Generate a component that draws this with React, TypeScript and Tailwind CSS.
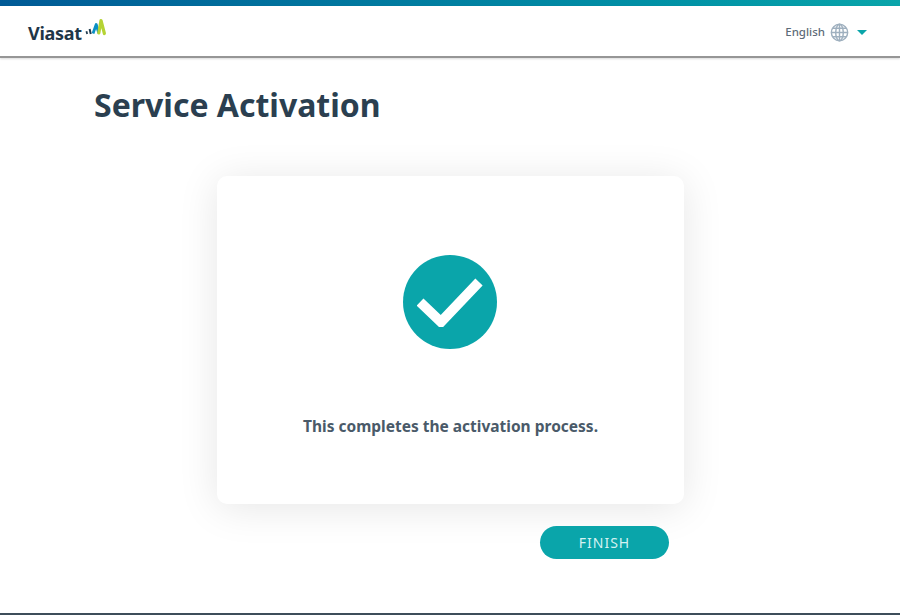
function ViasatMark() {
  return (
    <svg width="24" height="20" viewBox="85 14 24 20" className="mt-[-13px] ml-[2px]" fill="none">
      <path d="M87.4 28.3 L88.2 31" stroke="#1d3a4f" strokeWidth="1.8" />
      <path d="M90.6 26 L91.8 31" stroke="#1d3a4f" strokeWidth="2" />
      <path d="M94 30.5 L97.2 21.5 L99.8 30" stroke="#0a8fc4" strokeWidth="2.8" strokeLinejoin="round" />
      <path d="M99.8 30 L102 17.5 L105.4 30.5" stroke="#b5d334" strokeWidth="3.2" strokeLinecap="round" strokeLinejoin="round" />
    </svg>
  );
}

function GlobeIcon() {
  return (
    <svg width="19" height="19" viewBox="0 0 20 20" fill="none" stroke="#9fb0bf" strokeWidth="1.5">
      <circle cx="10" cy="10" r="8.6" />
      <ellipse cx="10" cy="10" rx="4" ry="8.6" />
      <path d="M10 1.4 V18.6 M1.4 10 H18.6 M2.8 5.6 H17.2 M2.8 14.4 H17.2" />
    </svg>
  );
}

export default function App() {
  return (
    <div className="flex h-[615px] w-[900px] flex-col overflow-hidden bg-white font-['Noto_Sans',sans-serif]">
      <div className="h-[6px] bg-gradient-to-r from-[#005a96] to-[#0aa5aa]" />
      <header className="flex h-[52px] items-center justify-between border-b-2 border-[#969696] pr-[33px] pl-[28px] shadow-[0_1px_2px_rgba(0,0,0,0.15)]">
        <div className="flex items-center pt-[4px]">
          <span className="text-[18px] leading-none font-bold tracking-[-0.3px] text-[#1f3648]">Viasat</span>
          <ViasatMark />
        </div>
        <div className="flex items-center pt-[2px]">
          <span className="text-[11.5px] font-medium text-[#5d6b78]">English</span>
          <span className="ml-[5px]"><GlobeIcon /></span>
          <span className="ml-[8px] h-0 w-0 border-x-[5px] border-t-[5px] border-x-transparent border-t-[#0aa5aa]" />
        </div>
      </header>
      <main className="flex flex-1 flex-col">
        <h1 className="mt-[24px] ml-[94px] text-[32px] leading-[45px] font-bold text-[#2b3f50]">Service Activation</h1>
        <div className="mt-[49px] ml-[217px] flex h-[328px] w-[467px] flex-col items-center rounded-[10px] bg-white shadow-[0_4px_40px_rgba(0,0,0,0.1)]">
          <div className="mt-[79px] mr-[2px] flex h-[94px] w-[94px] items-center justify-center rounded-full bg-[#0aa5aa]">
            <svg width="66" height="50" viewBox="0 0 66 50" fill="none">
              <path d="M3 25 L24 45 L62 5" stroke="#fff" strokeWidth="10" />
            </svg>
          </div>
          <p className="mt-[65px] text-[15.5px] leading-[24px] font-bold text-[#4a5a69]">This completes the activation process.</p>
        </div>
        <div className="mt-[22px] ml-[540px]">
          <button className="h-[33px] w-[129px] rounded-full bg-[#0aa5aa] text-[14px] tracking-[1px] text-[#d6f2f2]">FINISH</button>
        </div>
      </main>
      <div className="h-[2px] bg-[#3d4d5a]" />
    </div>
  );
}
